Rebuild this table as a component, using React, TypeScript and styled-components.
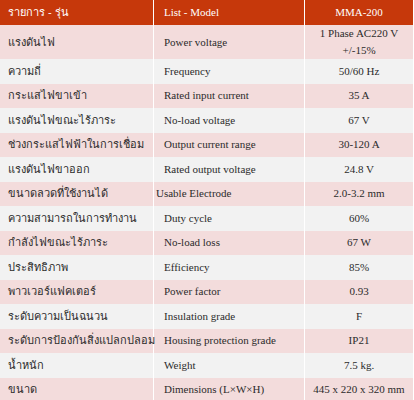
import React from "react";
import styled, { createGlobalStyle } from "styled-components";

const Global = createGlobalStyle`
  html, body { margin: 0; padding: 0; background: #ffffff; }
  body { font-family: "Liberation Serif", "Times New Roman", serif; }
`;

const Table = styled.table`
  width: 413px;
  border-collapse: separate;
  border-spacing: 0;
  table-layout: fixed;
  font-family: "Liberation Serif", "Times New Roman", serif;
  font-size: 11px;
  color: #2b2b2b;
`;

const Col = styled.col<{ $w: number }>`
  width: ${(p) => p.$w}px;
`;

const HeadRow = styled.tr`
  height: 25px;
  background: #c6380b;
  color: #ffffff;
`;

const Row = styled.tr<{ $odd: boolean; $h: number }>`
  height: ${(p) => p.$h}px;
  background: ${(p) => (p.$odd ? "#f3dcdc" : "#f2f2f2")};
`;

const Cell = styled.td<{ $col: 1 | 2 | 3; $indent?: number }>`
  padding: 0 0 0 ${(p) => (p.$col === 1 ? 8 : p.$col === 2 ? (p.$indent ?? 10) : 0)}px;
  text-align: ${(p) => (p.$col === 3 ? "center" : "left")};
  vertical-align: middle;
  border-right: ${(p) => (p.$col === 3 ? "0" : "1px solid #ffffff")};
  line-height: 17px;
  white-space: nowrap;
  font-family: ${(p) =>
    p.$col === 1
      ? '"Liberation Sans", "Noto Sans", Tahoma, sans-serif'
      : '"Liberation Serif", "Times New Roman", serif'};
  font-size: 11px;
`;

const HeadCell = styled(Cell).attrs({ as: "th" })`
  color: #ffffff;
  font-weight: normal;
`;

type Spec = { th: string; en: string; val: React.ReactNode; h?: number; indent?: number };

const rows: Spec[] = [
  { th: "แรงดันไฟ", en: "Power voltage", val: (<>1 Phase AC220 V<br />+/-15%</>), h: 33 },
  { th: "ความถี่", en: "Frequency", val: "50/60 Hz" },
  { th: "กระแสไฟขาเข้า", en: "Rated input current", val: "35 A" },
  { th: "แรงดันไฟขณะไร้ภาระ", en: "No-load voltage", val: "67 V" },
  { th: "ช่วงกระแสไฟฟ้าในการเชื่อม", en: "Output current range", val: "30-120 A" },
  { th: "แรงดันไฟขาออก", en: "Rated output voltage", val: "24.8 V" },
  { th: "ขนาดลวดที่ใช้งานได้", en: "Usable Electrode", val: "2.0-3.2 mm", indent: 2 },
  { th: "ความสามารถในการทำงาน", en: "Duty cycle", val: "60%" },
  { th: "กำลังไฟขณะไร้ภาระ", en: "No-load loss", val: "67 W" },
  { th: "ประสิทธิภาพ", en: "Efficiency", val: "85%" },
  { th: "พาวเวอร์แฟคเตอร์", en: "Power factor", val: "0.93" },
  { th: "ระดับความเป็นฉนวน", en: "Insulation grade", val: "F" },
  { th: "ระดับการป้องกันสิ่งแปลกปลอม", en: "Housing protection grade", val: "IP21" },
  { th: "น้ำหนัก", en: "Weight", val: "7.5 kg." },
  { th: "ขนาด", en: "Dimensions (L×W×H)", val: "445 x 220 x 320 mm" },
];

export default function App() {
  return (
    <>
      <Global />
      <Table>
        <colgroup>
          <Col $w={154} />
          <Col $w={151} />
          <Col $w={108} />
        </colgroup>
        <thead>
          <HeadRow>
            <HeadCell $col={1}>รายการ - รุ่น</HeadCell>
            <HeadCell $col={2}>List - Model</HeadCell>
            <HeadCell $col={3}>MMA-200</HeadCell>
          </HeadRow>
        </thead>
        <tbody>
          {rows.map((r, i) => (
            <Row key={i} $odd={i % 2 === 0} $h={r.h ?? 24.5}>
              <Cell $col={1}>{r.th}</Cell>
              <Cell $col={2} $indent={r.indent}>{r.en}</Cell>
              <Cell $col={3}>{r.val}</Cell>
            </Row>
          ))}
        </tbody>
      </Table>
    </>
  );
}
